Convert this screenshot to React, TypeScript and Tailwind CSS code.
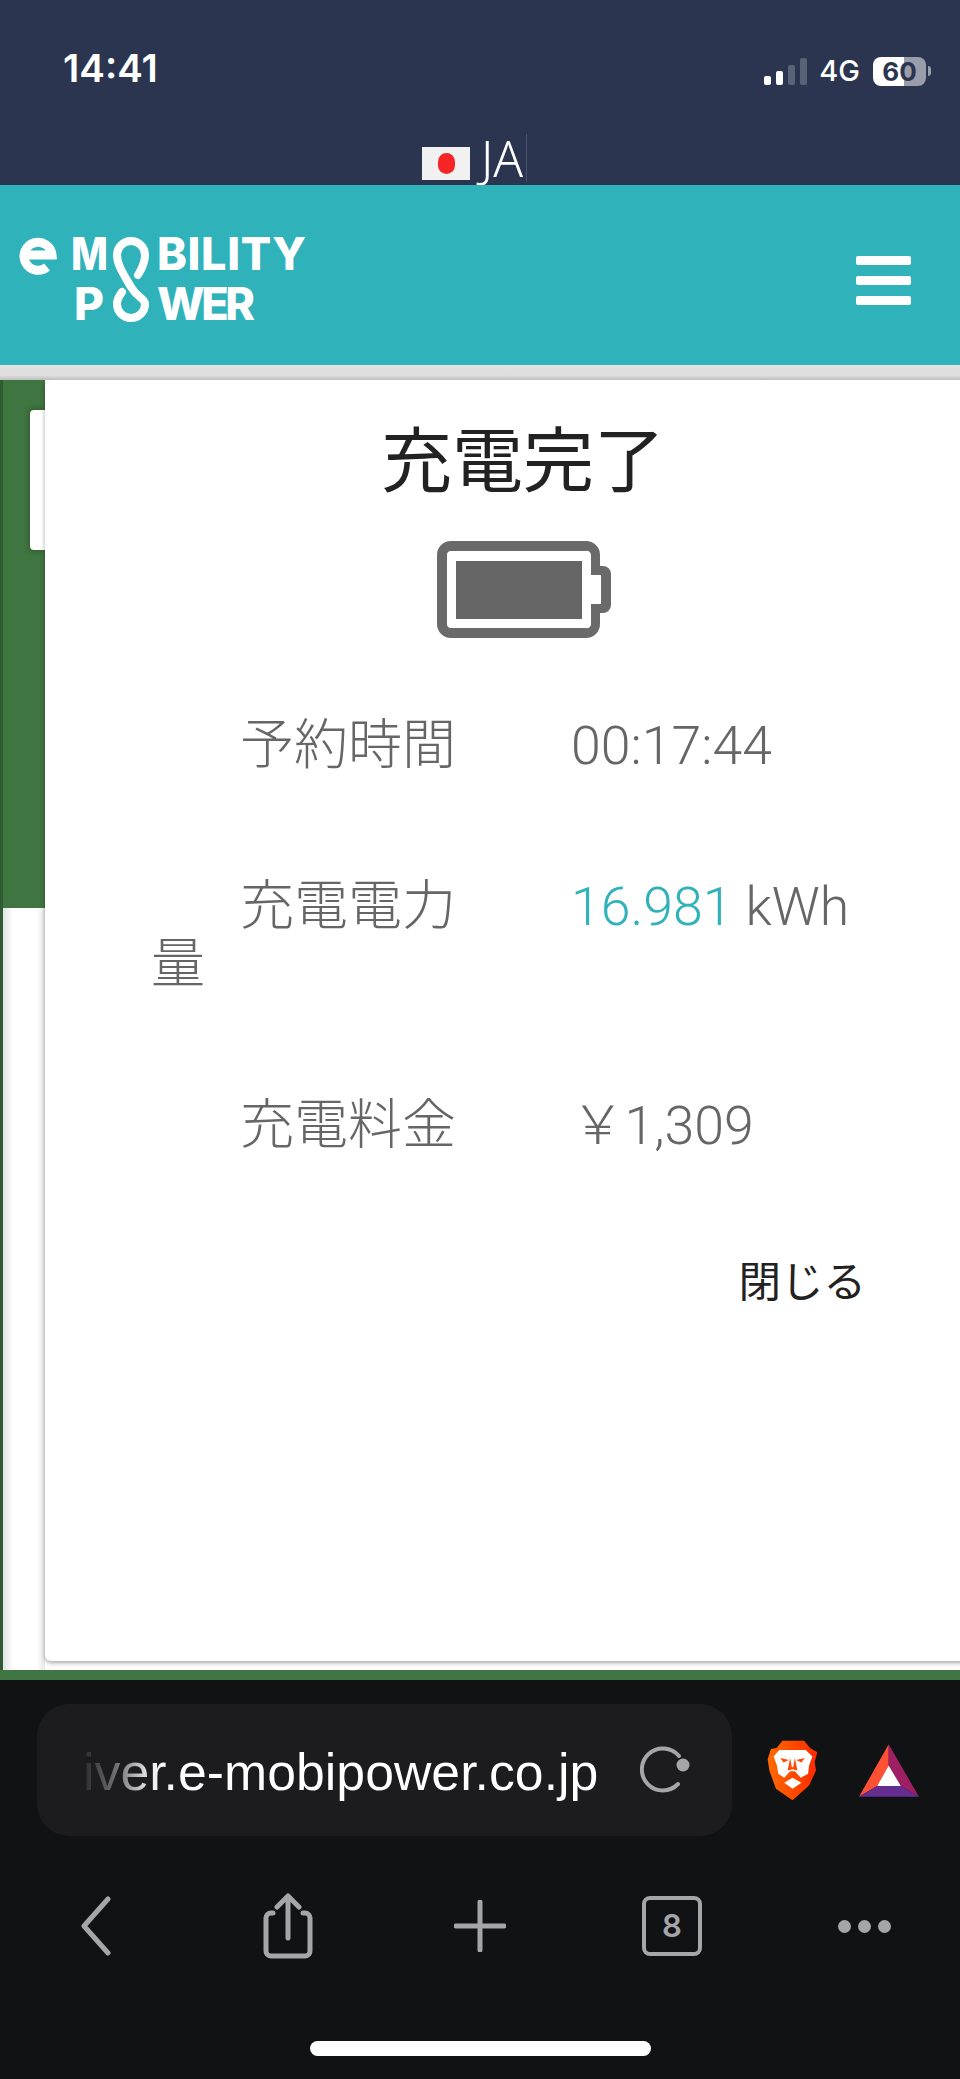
const SANS = "font-['Roboto',_'Noto_Sans_CJK_JP',_sans-serif]";

function StatusBar() {
  return (
    <div className="flex h-[91px] items-end justify-between pl-[63px] pr-[29px] pb-[5px]">
      <span className="font-['Inter',_sans-serif] text-[38.5px] leading-[36px] font-semibold text-white">14:41</span>
      <div className="flex items-center">
        <div className="flex h-[28px] items-end gap-[5px]">
          <div className="h-[9px] w-[7px] rounded-[2px] bg-white" />
          <div className="h-[14px] w-[7px] rounded-[2px] bg-white" />
          <div className="h-[20px] w-[7px] rounded-[2px] bg-[#596277]" />
          <div className="h-[27px] w-[7px] rounded-[2px] bg-[#596277]" />
        </div>
        <span className="ml-[12px] font-['Inter',_sans-serif] text-[29px] leading-[30px] font-medium text-white">4G</span>
        <div className="ml-[13px] flex h-[29px] w-[53px] items-center justify-center rounded-[8px] bg-[linear-gradient(90deg,#fff_58%,#9a9eaa_58%)] font-['Inter',_sans-serif] text-[26px] font-bold text-[#2b3550]">
          60
        </div>
        <div className="ml-[2px] h-[10px] w-[3px] rounded-r-full bg-[#9a9eaa]" />
      </div>
    </div>
  );
}

function LanguageRow() {
  return (
    <div className="flex h-[94px] items-end pl-[422px] pb-[3px]">
      <div className="mb-[2px] flex h-[33px] w-[48px] items-center justify-center bg-[#f1f1f1]">
        <div className="h-[21px] w-[17px] rounded-full bg-[#f52525]" />
      </div>
      <span className="mb-[-3px] ml-[11px] font-['Noto_Sans',_sans-serif] text-[49px] leading-[54px] font-light text-white">JA</span>
      <div className="ml-[3px] h-[48px] w-px bg-[#49526b]" />
    </div>
  );
}

function Logo() {
  return (
    <svg viewBox="0 0 340 120" className="h-[120px] w-[340px]">
      {/* the "e" mark */}
      <path d="M24 35 H52 A14 14 0 1 0 47 47" fill="none" stroke="#fff" strokeWidth="9" />
      <text x="71" y="50" textLength="37" lengthAdjust="spacingAndGlyphs" className="fill-white font-['Inter',_sans-serif] text-[45px] font-extrabold">M</text>
      <text x="157" y="50" textLength="149" className="fill-white font-['Inter',_sans-serif] text-[45px] font-extrabold">BILITY</text>
      <text x="74" y="100" textLength="30" lengthAdjust="spacingAndGlyphs" className="fill-white font-['Inter',_sans-serif] text-[45px] font-extrabold">P</text>
      <text x="157" y="100" textLength="98" className="fill-white font-['Inter',_sans-serif] text-[45px] font-extrabold">WER</text>
      {/* figure of eight standing in for the two O letters */}
      <path
        d="M138 55 C143 47 145 41 145 35 A14 14 0 1 0 117 35 C117 45 124 55 131 67 C138 79 145 78 145 84 A14 14 0 1 1 117 84 C117 80 119 76 122 72"
        fill="none"
        stroke="#fff"
        strokeWidth="8"
        strokeLinecap="round"
      />
    </svg>
  );
}

function BrandBar() {
  return (
    <div className="flex h-[180px] items-center justify-between bg-[#30b2bb] pt-[10px] pr-[49px]">
      <Logo />
      <div className="flex flex-col gap-[11px]">
        <div className="h-[9px] w-[55px] rounded-[2px] bg-white" />
        <div className="h-[9px] w-[55px] rounded-[2px] bg-white" />
        <div className="h-[9px] w-[55px] rounded-[2px] bg-white" />
      </div>
    </div>
  );
}

function BatteryFull() {
  return (
    <svg viewBox="0 0 174 97" className="h-[97px] w-[174px]">
      <path
        d="M14 0 H149 A14 14 0 0 1 163 14 V25 H166 A8 8 0 0 1 174 33 V64 A8 8 0 0 1 166 72 H163 V83 A14 14 0 0 1 149 97 H14 A14 14 0 0 1 0 83 V14 A14 14 0 0 1 14 0 Z M14 10 A4 4 0 0 0 10 14 V83 A4 4 0 0 0 14 87 H149 A4 4 0 0 0 154 83 V63 H164 V34 H154 V14 A4 4 0 0 0 149 10 Z"
        fill="#6a6a6a"
        fillRule="evenodd"
      />
      <rect x="19" y="20" width="126" height="58" fill="#666" />
    </svg>
  );
}

function ResultRow({ label, children, wrapped }: { label: string; children: React.ReactNode; wrapped?: string }) {
  return (
    <div className="flex items-start">
      <div className="w-[420px] shrink-0 text-[54px] leading-[58px] font-light">
        <div className="pl-[89px]">{label}</div>
        {wrapped && <div>{wrapped}</div>}
      </div>
      <div className="text-[53.6px] leading-[58px] font-light">{children}</div>
    </div>
  );
}

function ChargeDialog() {
  return (
    <div className={`relative h-[1281px] w-[956px] shrink-0 rounded-l-[6px] bg-white pt-[42px] shadow-[0_2px_4px_rgba(0,0,0,0.35)] ${SANS}`}>
      <h2 className="text-center text-[71px] leading-[80px] font-normal text-[#222]">充電完了</h2>
      <div className="mt-[39px] ml-[2px] flex justify-center">
        <BatteryFull />
      </div>
      <div className="mt-[79px] flex flex-col gap-[103px] pl-[106px] text-[#666]">
        <ResultRow label="予約時間">00:17:44</ResultRow>
        <ResultRow label="充電電力" wrapped="量">
          <span className="text-[#30b2bb]">16.981</span> kWh
        </ResultRow>
        <ResultRow label="充電料金">￥1,309</ResultRow>
      </div>
      <div className="mt-[98px] pr-[135px] text-right text-[42.5px] leading-[60px] text-[#222]">閉じる</div>
    </div>
  );
}

function PageBehind() {
  return (
    <div className="flex w-[45px] shrink-0 flex-col border-l-[3px] border-[#2f5c32]">
      <div className="h-[528px] bg-[#3e7540] pt-[30px] pl-[27px]">
        <div className="h-[140px] rounded-l-[4px] bg-white shadow-[0_0_6px_rgba(0,0,0,0.35)]" />
      </div>
      <div className="flex-1 bg-[linear-gradient(90deg,#e4e4e4_0%,#fff_25%,#fff_80%,#e8e8e8_100%)]" />
    </div>
  );
}

function BraveIcon() {
  return (
    <svg viewBox="78 58 154 184" className="h-[61px] w-[51px]">
      <defs>
        <linearGradient id="brave-shield" x1="0" y1="0" x2="1" y2="0">
          <stop offset="0" stopColor="#ff6a00" />
          <stop offset="1" stopColor="#ff2a00" />
        </linearGradient>
      </defs>
      <path d="M125 60 H190 L208 82 L230 95 L222 125 L226 150 L205 195 L155 240 L105 205 L85 150 L80 115 L90 85 L107 82 Z" fill="url(#brave-shield)" />
      {/* lion head */}
      <path d="M98 108 L115 88 H195 L215 108 L205 135 L202 160 L180 172 L162 152 H148 L130 172 L112 160 L108 135 Z" fill="#fff" />
      <path d="M118 112 L144 118 L128 126 Z M192 112 L166 118 L182 126 Z" fill="#ff4a00" />
      <path d="M148 112 L140 150 L155 146 L170 150 L162 112 L157 140 H153 Z" fill="#ff4a00" />
      <path d="M130 187 L155 172 L182 187 L155 205 Z" fill="#fff" />
    </svg>
  );
}

function BatIcon() {
  return (
    <svg viewBox="353 68 182 160" className="h-[53px] w-[60px]">
      <path d="M443 68 L353 228 L408 195 L443 133 Z" fill="#ff5033" />
      <path d="M443 68 L535 228 L480 195 L443 133 Z" fill="#9e1f63" />
      <path d="M353 228 H535 L480 195 H408 Z" fill="#662d91" />
      <path d="M443 133 L480 195 H408 Z" fill="#fff" />
    </svg>
  );
}

function UrlBar() {
  return (
    <div className="flex h-[132px]">
      <div className="ml-[37px] flex h-[132px] w-[695px] items-center rounded-[32px] bg-[#1c1c1e] pl-[46px]">
        <span className="w-[516px] shrink-0 whitespace-nowrap bg-[linear-gradient(90deg,#2a2a2c_0%,#777_7%,#eee_13%,#fff_20%)] bg-clip-text pt-[4px] font-['Liberation_Sans',_sans-serif] text-[51.8px] leading-[66px] text-transparent">
          iver.e-mobipower.co.jp
        </span>
        {/* reload arrow */}
        <svg viewBox="0 0 50 50" className="ml-[41px] h-[50px] w-[50px]">
          <path d="M38 39 A21 21 0 1 1 39 11" fill="none" stroke="#a5a5aa" strokeWidth="4" strokeLinecap="round" />
          <circle cx="43" cy="20" r="6.5" fill="#a5a5aa" />
        </svg>
      </div>
      <div className="ml-[35px] flex h-[132px] items-center">
        <BraveIcon />
      </div>
      <div className="ml-[41px] flex h-[132px] items-center">
        <BatIcon />
      </div>
    </div>
  );
}

function ToolBar() {
  return (
    <div className="mt-[57px] grid h-[66px] grid-cols-5 text-[#a5a5aa]">
      <div className="flex items-center justify-center">
        <svg viewBox="0 0 30 60" className="h-[60px] w-[30px]">
          <path d="M27 3 L3 30 L27 57" fill="none" stroke="currentColor" strokeWidth="5" strokeLinecap="round" strokeLinejoin="round" />
        </svg>
      </div>
      <div className="flex items-center justify-center">
        <svg viewBox="0 0 50 66" className="h-[66px] w-[50px]">
          <path d="M10 20 H8 A5 5 0 0 0 3 25 V58 A5 5 0 0 0 8 63 H42 A5 5 0 0 0 47 58 V25 A5 5 0 0 0 42 20 H40" fill="none" stroke="currentColor" strokeWidth="5" strokeLinecap="round" />
          <path d="M25 45 V3 M14 14 L25 3 L36 14" fill="none" stroke="currentColor" strokeWidth="5" strokeLinecap="round" strokeLinejoin="round" />
        </svg>
      </div>
      <div className="flex items-center justify-center">
        <svg viewBox="0 0 52 52" className="h-[52px] w-[52px]">
          <path d="M26 2 V50 M2 26 H50" fill="none" stroke="currentColor" strokeWidth="5" strokeLinecap="round" />
        </svg>
      </div>
      <div className="flex items-center justify-center">
        <div className="flex h-[60px] w-[60px] items-center justify-center rounded-[8px] border-[4px] border-current font-['Inter',_sans-serif] text-[31px] font-semibold">
          8
        </div>
      </div>
      <div className="flex items-center justify-center gap-[7px]">
        <div className="h-[13px] w-[13px] rounded-full bg-current" />
        <div className="h-[13px] w-[13px] rounded-full bg-current" />
        <div className="h-[13px] w-[13px] rounded-full bg-current" />
      </div>
    </div>
  );
}

export default function App() {
  return (
    <div className="flex h-[2079px] w-[960px] flex-col overflow-hidden bg-[#111214]">
      <div className="bg-[#2b3550]">
        <StatusBar />
        <LanguageRow />
      </div>
      <BrandBar />
      <div className="h-[15px] bg-[linear-gradient(180deg,#e2e2e2_0%,#dedede_70%,#bdbdbd_100%)]" />
      <div className="flex h-[1290px] overflow-hidden bg-white">
        <PageBehind />
        <ChargeDialog />
      </div>
      <div className="h-[10px] bg-[#3e7540]" />
      <div className="pt-[24px]">
        <UrlBar />
        <ToolBar />
        <div className="mx-auto mt-[82px] h-[15px] w-[341px] rounded-full bg-white" />
      </div>
    </div>
  );
}
